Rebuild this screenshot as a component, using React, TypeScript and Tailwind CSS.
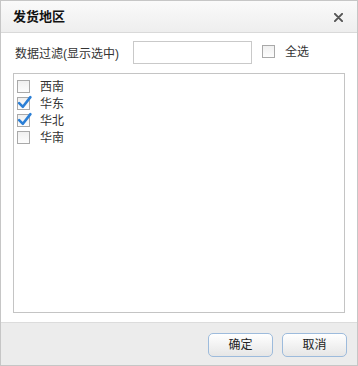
import { useState } from "react";

const REGIONS = [
  { name: "西南", checked: false },
  { name: "华东", checked: true },
  { name: "华北", checked: true },
  { name: "华南", checked: false },
];

function Box({ checked }: { checked: boolean }) {
  return (
    <span className="relative inline-block w-[13px] h-[13px] border border-[#a9a9a9] bg-gradient-to-b from-[#f0f0f0] to-[#fdfdfd]">
      {checked && (
        <svg
          viewBox="0 0 14 14"
          className="absolute left-[-1px] top-[-3px] w-[15px] h-[15px]"
        >
          <path
            d="M2 7.5 L5.5 11 L12.5 2"
            fill="none"
            stroke="#2b7fd6"
            strokeWidth="2.4"
            strokeLinecap="round"
            strokeLinejoin="round"
          />
        </svg>
      )}
    </span>
  );
}

export default function App() {
  const [items, setItems] = useState(REGIONS);
  const [filter, setFilter] = useState("");

  return (
    <div
      className="w-[358px] h-[366px] flex flex-col border border-[#c6c6c6] bg-white text-[12px] text-[#222]"
      style={{ fontFamily: '"Liberation Sans", "Noto Sans CJK SC", sans-serif' }}
    >
      {/* 标题栏 */}
      <div className="h-[32px] flex items-center justify-between pl-[12px] pr-[12px] pt-[1px] border-b border-[#d9d9d9] bg-gradient-to-b from-[#fafafa] to-[#eeeeee]">
        <span className="text-[13px] font-bold text-[#111]">发货地区</span>
        <svg viewBox="0 0 10 10" className="w-[9px] h-[9px] mr-[2px]">
          <path
            d="M1 1 L9 9 M9 1 L1 9"
            stroke="#555"
            strokeWidth="2.2"
            strokeLinecap="round"
          />
        </svg>
      </div>

      {/* 内容 */}
      <div className="flex-1 flex flex-col px-[12px]">
        <div className="h-[39px] flex items-center">
          <span className="w-[120px] pl-[2px] pt-[2px] text-[#333]">数据过滤(显示选中)</span>
          <input
            value={filter}
            onChange={(e) => setFilter(e.target.value)}
            className="w-[119px] h-[23px] border border-[#c9c9c9] outline-none px-1"
          />
          <span className="ml-[10px] flex items-center mb-[3px]">
            <Box checked={false} />
          </span>
          <span className="ml-[10px] mb-[2px] text-[#333]">全选</span>
        </div>
        <div className="h-[240px] w-[332px] mt-[1px] border border-[#c4c4c4] pt-[4px] pl-[3px]">
          {items.map((it, i) => (
            <div
              key={it.name}
              className="h-[17px] flex items-center cursor-pointer"
              onClick={() =>
                setItems(
                  items.map((x, j) => (j === i ? { ...x, checked: !x.checked } : x))
                )
              }
            >
              <Box checked={it.checked} />
              <span className="ml-[10px] text-[#333]">{it.name}</span>
            </div>
          ))}
        </div>
      </div>

      {/* 按钮栏 */}
      <div className="h-[43px] border-t border-[#dcdcdc] bg-[#ececec] flex items-center justify-end gap-[9px] pr-[10px]">
        <button className="w-[65px] h-[24px] mt-[1px] rounded-[5px] border border-[#9dbbdc] bg-gradient-to-b from-[#ffffff] to-[#e6e6e6] text-[12px] text-[#222]">
          确定
        </button>
        <button className="w-[65px] h-[24px] mt-[1px] rounded-[5px] border border-[#9dbbdc] bg-gradient-to-b from-[#ffffff] to-[#e6e6e6] text-[12px] text-[#222]">
          取消
        </button>
      </div>
    </div>
  );
}
